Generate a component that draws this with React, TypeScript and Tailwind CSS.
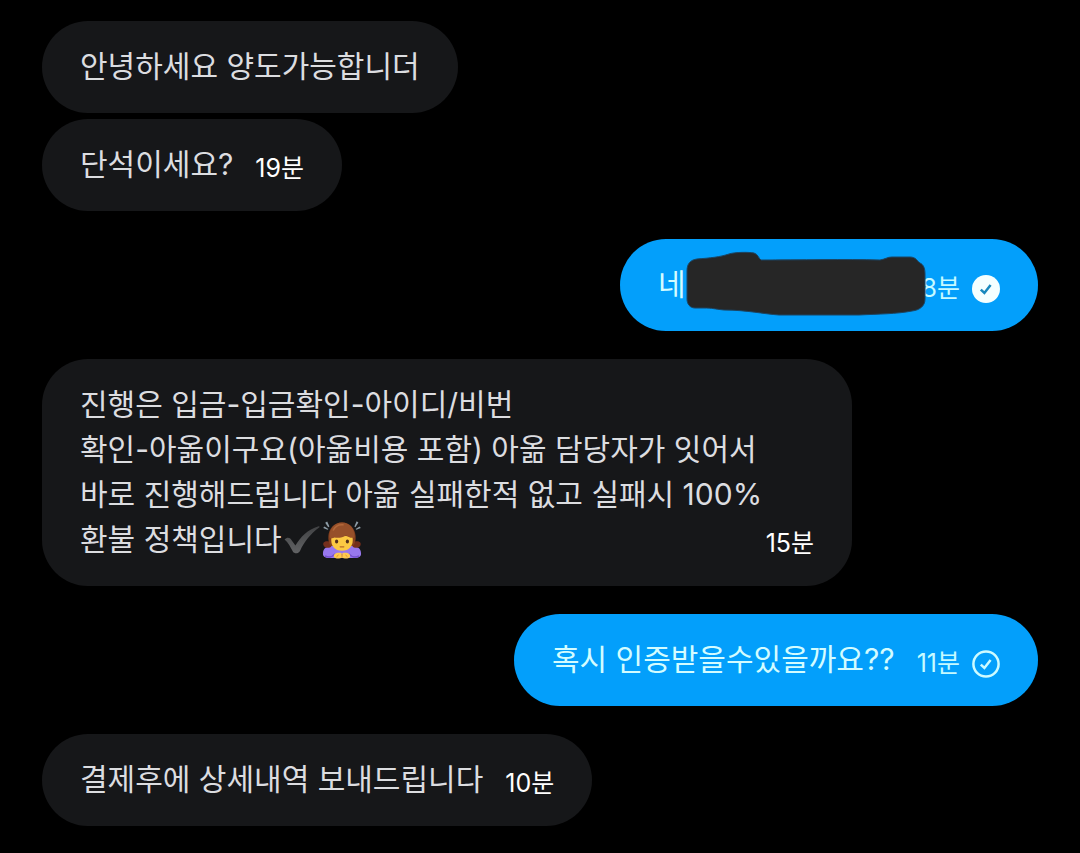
import type { ReactNode } from 'react';
import clsx from 'clsx';

type ReadState = 'read' | 'sent';

interface Message {
  id: number;
  mine?: boolean;
  wide?: boolean;
  grouped?: boolean;
  tightTime?: boolean;
  body: ReactNode;
  time?: string;
  state?: ReadState;
}

function HeavyCheck() {
  return (
    <svg viewBox="0 0 36 32" className="-mt-2 -mb-1 ml-0.5 inline-block h-8 w-9 align-middle" role="img" aria-label="체크">
      <defs>
        <linearGradient id="check-fill" x1="0" y1="1" x2="0" y2="0">
          <stop offset="0" stopColor="#626365" />
          <stop offset="1" stopColor="#414244" />
        </linearGradient>
      </defs>
      <path
        d="M0.6 15.5C3 12.8 6 13.4 7.4 16L11.4 21.6C16.5 13 23.5 5.5 34.6 2.2C35.7 1.9 35.9 2.8 35.1 3.5C27 9.5 20.5 17 16 27C14.4 29.8 10.4 30 9 27.8C6.6 23.4 4.2 18.5 0.6 15.5Z"
        fill="url(#check-fill)"
      />
    </svg>
  );
}

function BowingWoman() {
  return (
    <svg viewBox="0 0 40 40" className="-mt-2 -mb-1 ml-0.5 inline-block size-10 align-middle" role="img" aria-label="고개 숙여 인사하는 여자">
      <g fill="#8d9ca6">
        <path d="M3.2 2.8L5.2 1.4L7.4 6.4L6.2 7.2Z" />
        <path d="M1.2 8L2.4 6.4L6.4 9L5.6 9.8Z" />
        <path d="M36.4 2.4L34.6 1.2L32.4 6.4L33.4 7.2Z" />
        <path d="M38.8 8L37.6 6.4L33.6 9L34.4 9.8Z" />
      </g>
      <path d="M1 33C1 28.5 5 26 10 26H30C35 26 39 28.5 39 33C39.5 36.5 37 38 33 38H7C3 38 0.5 36.5 1 33Z" fill="#9878ee" />
      <path d="M3 36C7 38 11 36.5 13 34M37 36C33 38 29 36.5 27 34" stroke="#7550cf" strokeWidth="1.6" fill="none" />
      <path d="M7 21.5C3 20.5 0.6 22.5 1.4 25C2 27.6 5.4 28.4 8 27.4C10.6 26.4 10.6 22.5 7 21.5ZM33 21.5C37 20.5 39.4 22.5 38.6 25C38 27.6 34.6 28.4 32 27.4C29.4 26.4 29.4 22.5 33 21.5Z" fill="#742f1c" />
      <path d="M20 2.4C11.5 2.4 7 9 6.4 16C6 20 7 24 9 26H31C33 24 34 20 33.6 16C33 9 28.5 2.4 20 2.4Z" fill="#85401f" />
      <path d="M9.5 17C13 15.5 27 15.5 30.5 17C32 26 27 30.8 20 30.8C13 30.8 8 26 9.5 17Z" fill="#fcc943" />
      <path d="M20 2.4C12 2.4 7.4 9 7.4 17.4C9 18.6 11 18.4 12.6 17.6C17 18.2 21 17.4 24 15.2C26 17 29.5 18.6 32.6 17.4C32.6 9 28 2.4 20 2.4Z" fill="#96502a" />
      <path d="M11.4 10C13.4 6 17 4.4 21 4.8" stroke="#b3683a" strokeWidth="1.6" fill="none" strokeLinecap="round" />
      <ellipse cx="14.6" cy="21.4" rx="1.6" ry="2" fill="#54301c" />
      <ellipse cx="25.4" cy="21.4" rx="1.6" ry="2" fill="#54301c" />
      <path d="M18.2 26.8H21.8" stroke="#b86a28" strokeWidth="1.2" strokeLinecap="round" />
      <path d="M12 37C11 34 14.5 32 19.5 33L20 36L20.5 33C25.5 32 29 34 28 37C26 39.2 22 38.8 20 37.4C18 38.8 14 39.2 12 37Z" fill="#ffca4f" />
      <path d="M14.5 36.8L16.5 35M25.5 36.8L23.5 35M20 34V37.4" stroke="#d98a2b" strokeWidth="0.9" />
    </svg>
  );
}

// Scribble drawn over the private part of a message
function Redaction() {
  return (
    <span className="relative inline-block h-6 w-[236px] align-middle">
      <svg viewBox="0 0 240 66" className="absolute -top-6 left-0 h-[66px] w-[240px]" aria-hidden="true">
        <path
          d="M1 20C1 13 4 9 11 8C24 7 34 6 43 3C49 1 63 1 68 2C72 3 73 8 75 9C113 9 160 8 194 9C200 8 201 6 206 6H224C230 6 231 10 234 12C238 14 239 18 239 23V48C239 55 234 59 226 60C211 63 192 63 173 64H93C78 63 60 59 38 59C28 58 27 57 17 57H9C4 57 1 53 1 48Z"
          fill="#262626"
          stroke="#1b4564"
          strokeWidth="1"
        />
      </svg>
    </span>
  );
}

function StatusIcon({ state }: { state: ReadState }) {
  const read = state === 'read';
  return (
    <svg viewBox="0 0 28 28" className="size-7" fill="none" role="img" aria-label={read ? '읽음' : '전송됨'}>
      {read ? (
        <circle cx="14" cy="14" r="14" fill="#f4ffff" />
      ) : (
        <circle cx="14" cy="14" r="12.6" stroke="#cdfbff" strokeWidth="2.5" />
      )}
      <path d="M8.8 14.6L12.4 18L18.6 10" stroke={read ? '#1788bd' : '#cdfbff'} strokeWidth="2.5" />
    </svg>
  );
}

const MESSAGES: Message[] = [
  { id: 1, body: '안녕하세요 양도가능합니더' },
  { id: 2, grouped: true, body: '단석이세요?', time: '19분' },
  { id: 3, mine: true, tightTime: true, body: <>네<Redaction /></>, time: '8분', state: 'read' },
  {
    id: 4,
    wide: true,
    body: (
      <>
        진행은 입금-입금확인-아이디/비번
        <br />
        확인-아옮이구요(아옮비용 포함) 아옮 담당자가 잇어서
        <br />
        바로 진행해드립니다 아옮 실패한적 없고 실패시 100%
        <br />
        환불 정책입니다
        <HeavyCheck />
        <BowingWoman />
      </>
    ),
    time: '15분',
  },
  { id: 5, mine: true, body: '혹시 인증받을수있을까요??', time: '11분', state: 'sent' },
  { id: 6, body: '결제후에 상세내역 보내드립니다', time: '10분' },
];

function Bubble({ message }: { message: Message }) {
  const { mine, wide, grouped, tightTime, body, time, state } = message;
  return (
    <li
      className={clsx(
        'max-w-full rounded-[46px] px-[38px] pt-[23px] pb-6 text-[30px] leading-[45px] break-keep',
        mine ? 'self-end bg-[#039ffb] text-[#d3fcff]' : 'self-start bg-[#161719] text-[#dcdde0]',
        wide && 'w-[810px]',
        grouped ? 'mt-1.5' : 'mt-7 first:mt-0',
      )}
    >
      {body}
      {time && (
        <span
          className={clsx(
            'float-right mt-1 -mb-1 flex items-center gap-3 text-[25px] leading-[45px]',
            !tightTime && 'ml-[22px]',
            mine ? 'text-[#c6faff]' : 'text-white',
          )}
        >
          <time>{time}</time>
          {state && <StatusIcon state={state} />}
        </span>
      )}
    </li>
  );
}

export default function App() {
  return (
    <main className="min-h-screen bg-black px-[42px] pt-[21px] pb-[27px] font-['Inter','Noto_Sans_CJK_KR',sans-serif]">
      <ul className="flex flex-col">
        {MESSAGES.map((message) => (
          <Bubble key={message.id} message={message} />
        ))}
      </ul>
    </main>
  );
}
